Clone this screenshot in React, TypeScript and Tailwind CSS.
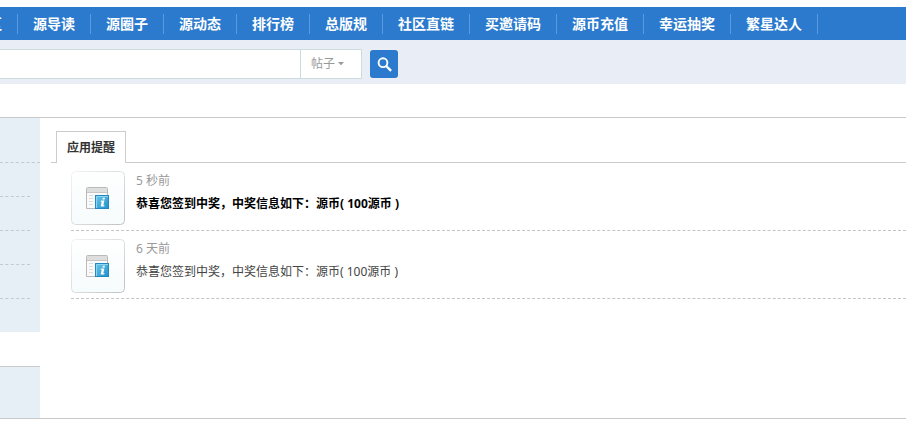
const NAV_ITEMS = [
  "源导读",
  "源圈子",
  "源动态",
  "排行榜",
  "总版规",
  "社区直链",
  "买邀请码",
  "源币充值",
  "幸运抽奖",
  "繁星达人",
];

const NOTICES = [
  { id: 1, time: "5 秒前", text: "恭喜您签到中奖，中奖信息如下：源币( 100源币 )", unread: true },
  { id: 2, time: "6 天前", text: "恭喜您签到中奖，中奖信息如下：源币( 100源币 )", unread: false },
];

function NavBar() {
  return (
    <nav className="flex h-[33px] items-center overflow-hidden bg-[#2b7acd] text-sm font-bold whitespace-nowrap text-white">
      <a href="#" className="flex h-5 w-[18px] shrink-0 items-center justify-end overflow-hidden border-r border-[#5a9be0] pr-[15px]">
        <span>区</span>
      </a>
      {NAV_ITEMS.map((item) => (
        <a key={item} href="#" className="flex h-5 shrink-0 items-center border-r border-[#5a9be0] px-[15px]">
          {item}
        </a>
      ))}
    </nav>
  );
}

function SearchBar() {
  return (
    <form className="flex h-11 items-center bg-[#e8edf6] pt-1" onSubmit={(event) => event.preventDefault()}>
      <div className="flex h-[30px] w-[362px] border-y border-r border-[#cfdcdc] bg-white">
        <input type="text" aria-label="搜索" className="min-w-0 flex-1 px-2 text-sm outline-none" />
        <div className="relative w-[61px] border-l border-[#cfdcdc]">
          <select aria-label="搜索类型" className="h-full w-full appearance-none bg-transparent pl-[10px] text-xs text-[#999] outline-none">
            <option>帖子</option>
          </select>
          <svg viewBox="0 0 6 4" className="pointer-events-none absolute top-3 right-[17px] h-1 w-1.5" aria-hidden="true">
            <path d="M0 0h6L3 3.2z" fill="#999" />
          </svg>
        </div>
      </div>
      <button type="submit" aria-label="搜索" className="ml-2 flex size-7 items-center justify-center rounded-[3px] bg-[#2b7acd]">
        <svg viewBox="0 0 28 28" className="size-7" fill="none" stroke="#fff" aria-hidden="true">
          <circle cx="13" cy="12.7" r="4.4" strokeWidth="1.9" />
          <path d="M16.2 16l4.9 4.9" strokeWidth="2.4" />
        </svg>
      </button>
    </form>
  );
}

function Sidebar() {
  return (
    <aside className="flex w-10 shrink-0 flex-col">
      <div className="bg-[#e6eef6] pb-[33px]">
        <div className="h-[45px] border-b border-dashed border-[#c4c9ce]" />
        {[1, 2, 3, 4].map((row) => (
          <div key={row} className="mr-[10px] h-[34px] border-b border-dashed border-[#c4c9ce]" />
        ))}
      </div>
      <div className="h-[34px]" />
      <div className="flex-1 border-t border-[#ccc] bg-[#e6eef6]" />
    </aside>
  );
}

function NoticeIcon() {
  return (
    <svg viewBox="0 0 54 54" className="size-[54px] shrink-0" aria-hidden="true">
      <defs>
        <linearGradient id="card" x1="0" y1="0" x2="0" y2="1">
          <stop offset="0" stopColor="#fff" />
          <stop offset="1" stopColor="#f6fbfc" />
        </linearGradient>
        <linearGradient id="edge" x1="0" y1="0" x2="1" y2="1">
          <stop offset="0" stopColor="#f1f3f4" />
          <stop offset="0.5" stopColor="#dcdfe1" />
          <stop offset="1" stopColor="#bfc3c5" />
        </linearGradient>
        <linearGradient id="info" x1="0" y1="0" x2="1" y2="1">
          <stop offset="0" stopColor="#6cc9ea" />
          <stop offset="1" stopColor="#1f8fcb" />
        </linearGradient>
      </defs>
      <rect x="0.5" y="0.5" width="53" height="53" rx="4" fill="url(#card)" stroke="url(#edge)" />
      <path d="M15.5 37.5V17.5a1 1 0 0 1 1-1h19a1 1 0 0 1 1 1v20z" fill="#fafafa" stroke="#b9b9b9" />
      <path d="M16 17h20v4H16z" fill="#dedede" />
      <path d="M16 21.5h20" stroke="#c6c6c6" />
      <path d="M18 24.5h4M24 24.5h10M18 27.5h4M18 30.5h4M18 33.5h4" stroke="#dcdcdc" />
      <rect x="24.5" y="24.5" width="13" height="13" fill="url(#info)" stroke="#2388bd" />
      <path d="M25.5 37V25.5H37" fill="none" stroke="#8bd6f0" />
      <path d="M31.8 26.7h2.200l-.4 1.900h-2.200zM30 29.500h3.400l-1.100 4.700h1.200l-.3 1.200h-3.600l1.100-4.700h-1z" fill="#fff" />
    </svg>
  );
}

function NoticeList() {
  return (
    <ul className="ml-5">
      {NOTICES.map((notice) => (
        <li key={notice.id} className="flex gap-[11px] border-b border-dashed border-[#c4c4c4] pt-2 pb-[5px]">
          <NoticeIcon />
          <div className="text-xs whitespace-nowrap">
            <p className="leading-5 text-[#999]">{notice.time}</p>
            <p className={notice.unread ? "mt-[3px] leading-5 font-bold text-black" : "mt-[3px] leading-5 text-[#444]"}>
              {notice.text}
            </p>
          </div>
        </li>
      ))}
    </ul>
  );
}

export default function App() {
  return (
    <div className="min-h-screen overflow-hidden bg-white pt-[7px] font-['Noto_Sans','Noto_Sans_CJK_SC',sans-serif]">
      <NavBar />
      <SearchBar />
      <div className="mt-[33px] flex border-y border-[#c6c8ca]">
        <Sidebar />
        <main className="min-h-[300px] min-w-0 flex-1 pt-[13px] pl-[11px]">
          <div className="flex border-b border-[#ccc] pl-[5px]">
            <a
              href="#"
              className="-mb-px border border-b-0 border-[#ccc] bg-white px-[10px] pt-[6px] pb-[5px] text-xs leading-5 font-bold text-[#333]"
            >
              应用提醒
            </a>
          </div>
          <NoticeList />
        </main>
      </div>
    </div>
  );
}
